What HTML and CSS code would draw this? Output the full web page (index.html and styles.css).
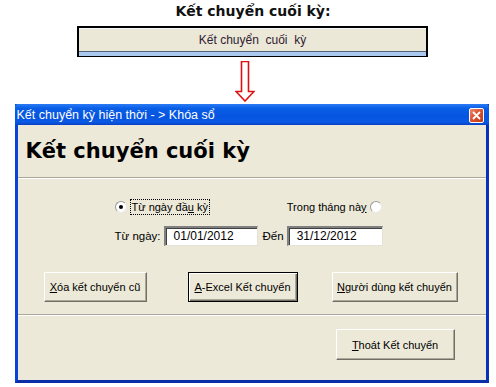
FILE: index.html
```html
<!DOCTYPE html>
<html lang="vi">
<head>
    <meta charset="UTF-8">
    <title>Kết chuyển cuối kỳ</title>
    <link rel="stylesheet" href="styles.css">
</head>
<body>
    <div class="page">
        <h1 class="caption">Kết chuyển cuối kỳ:</h1>
        <div class="menu-bar"><span>Kết chuyển&nbsp; cuối&nbsp; kỳ</span></div>
        <svg class="arrow" width="20" height="41" viewBox="0 0 20 41">
            <path d="M6.5 0.5 H13.5 V30.5 H19 L10 40 L1 30.5 H6.5 Z" fill="#fff" stroke="#e01010" stroke-width="1.6"/>
        </svg>

        <div class="window">
            <div class="titlebar">
                <span class="title-text">Kết chuyển kỳ hiện thời - &gt; Khóa sổ</span>
                <span class="close-btn">
                    <svg width="13" height="13" viewBox="0 0 13 13">
                        <path d="M3.5 3.5 L9.5 9.5 M9.5 3.5 L3.5 9.5" stroke="#fff" stroke-width="1.8" stroke-linecap="round"/>
                    </svg>
                </span>
            </div>
            <div class="window-body">
                <div class="header">
                    <h2>Kết chuyển cuối kỳ</h2>
                </div>

                <div class="options">
                    <div class="radio-row">
                        <label class="radio-item">
                            <span class="radio checked"></span>
                            <span class="focus-label">Từ ngày đầ<u>u</u> kỳ</span>
                        </label>
                        <label class="radio-item">
                            <span>Trong tháng nà<u>y</u></span>
                            <span class="radio"></span>
                        </label>
                    </div>
                    <div class="date-row">
                        <span class="date-label">Từ ngày:</span>
                        <span class="textbox from">01/01/2012</span>
                        <span class="date-label to-label">Đến</span>
                        <span class="textbox to">31/12/2012</span>
                    </div>
                </div>

                <div class="actions">
                    <button class="btn btn-delete"><u>X</u>óa kết chuyển cũ</button>
                    <button class="btn btn-default btn-excel"><u>A</u>-Excel Kết chuyển</button>
                    <button class="btn btn-user"><u>N</u>gười dùng kết chuyển</button>
                </div>

                <div class="footer">
                    <button class="btn btn-exit"><u>T</u>hoát Kết chuyển</button>
                </div>
            </div>
        </div>
    </div>
</body>
</html>
```

FILE: styles.css
```css
body {
    margin: 0;
    background-color: #ffffff;
    font-family: "DejaVu Sans", Verdana, sans-serif;
}
.page {
    width: 496px;
    height: 387px;
    display: flex;
    flex-direction: column;
    align-items: center;
    overflow: hidden;
}
.caption {
    margin: 1px 0 0 10px;
    font-size: 14px;
    line-height: 20px;
    font-weight: bold;
    color: #111;
}
.menu-bar {
    margin-top: 5px;
    margin-left: 9px;
    width: 347px;
    height: 24px;
    background-color: #ebe8d8;
    border: 2px solid #000;
    border-bottom: 1px solid #000;
    box-shadow: inset 0 1px 0 #f4f6fa, inset 0 -4px 0 #abc9ee, inset 0 -5px 0 #57657a;
    display: flex;
    justify-content: center;
    align-items: center;
    padding-bottom: 4px;
    font-family: "Liberation Sans", Arial, sans-serif;
    font-size: 12px;
    color: #302030;
}
.arrow {
    margin-top: 4px;
    margin-left: -6px;
    display: block;
}
.window {
    margin-top: 2px;
    margin-left: 7px;
    width: 468px;
    height: 276px;
    border: 3px solid #0842d8;
    border-top: none;
    border-right-color: #0631b8;
    border-bottom-color: #0a2fa8;
    display: flex;
    flex-direction: column;
    font-family: "Liberation Sans", Arial, sans-serif;
    font-size: 11px;
}
.titlebar {
    height: 21px;
    margin: 0 -3px;
    padding: 0 5px 0 2px;
    background: linear-gradient(to bottom, #2c7bf5 0%, #0a5fe6 20%, #0554e0 60%, #0a5ae6 85%, #0843c4 100%);
    border-radius: 3px 3px 0 0;
    display: flex;
    align-items: center;
    justify-content: space-between;
    color: #ffffff;
    font-size: 12.5px;
}
.close-btn {
    width: 13px;
    height: 13px;
    border: 1px solid #fff;
    border-radius: 2px;
    background: linear-gradient(135deg, #ee8a6a 0%, #d8502e 50%, #c03a18 100%);
    display: flex;
    margin-top: 1px;
}
.window-body {
    flex: 1;
    background-color: #ece9d8;
    display: flex;
    flex-direction: column;
}
.header {
    height: 52px;
    flex-shrink: 0;
    border-bottom: 1px solid #aca899;
    box-shadow: 0 1px 0 #ffffff;
    display: flex;
    align-items: center;
    padding-left: 8px;
}
.header h2 {
    margin: 0;
    font-family: "DejaVu Sans", Verdana, sans-serif;
    font-size: 21px;
    font-weight: bold;
    color: #000;
}
.options {
    margin: 21px 0 0 97px;
    width: 267px;
}
.radio-row {
    display: flex;
    justify-content: space-between;
    align-items: center;
    height: 16px;
}
.radio-item {
    display: flex;
    align-items: center;
    gap: 3px;
}
.radio {
    width: 10px;
    height: 10px;
    border-radius: 50%;
    border: 1px solid #9a9a9a;
    border-right-color: #e8e8e8;
    border-bottom-color: #e8e8e8;
    background-color: #fff;
    position: relative;
}
.radio.checked::after {
    content: "";
    position: absolute;
    left: 3px;
    top: 3px;
    width: 4px;
    height: 4px;
    border-radius: 50%;
    background-color: #000;
}
.focus-label {
    border: 1px dotted #000;
    padding: 1px 1px;
}
.date-row {
    display: flex;
    align-items: center;
    margin-top: 10px;
    height: 21px;
    white-space: nowrap;
}
.date-label {
    flex-shrink: 0;
    margin-right: 3px;
    font-size: 11.5px;
}
.to-label {
    margin-left: 5px;
    margin-right: 3px;
}
.textbox {
    flex-shrink: 0;
    height: 17px;
    background-color: #fff;
    border: 2px solid #808080;
    border-right: 1px solid #e4e2d8;
    border-bottom: 1px solid #e4e2d8;
    box-shadow: inset 1px 1px 0 #404040;
    display: flex;
    align-items: center;
    padding-left: 8px;
    font-size: 12px;
}
.textbox.from {
    width: 83px;
}
.textbox.to {
    width: 85px;
}
.actions {
    flex-shrink: 0;
    display: flex;
    align-items: flex-start;
    padding-left: 26px;
    margin-top: 26px;
    height: 30px;
    padding-bottom: 12px;
    border-bottom: 1px solid #aca899;
    box-shadow: 0 1px 0 #ffffff;
}
.btn {
    height: 30px;
    background-color: #ece9d8;
    border: 1px solid;
    border-color: #ffffff #716f64 #716f64 #ffffff;
    box-shadow: inset -1px -1px 0 #aca899;
    font-family: "Liberation Sans", Arial, sans-serif;
    font-size: 11px;
    color: #000;
    padding: 0;
}
.btn-delete {
    width: 103px;
}
.btn-excel {
    width: 110px;
    margin-left: 41px;
}
.btn-user {
    width: 126px;
    margin-left: 34px;
}
.btn-default {
    border: 1px solid #000;
    box-shadow: inset 1px 1px 0 #ffffff, inset -1px -1px 0 #716f64, inset -2px -2px 0 #aca899;
}
.footer {
    display: flex;
    justify-content: flex-end;
    padding: 14px 31px 0 0;
}
.btn-exit {
    width: 119px;
    height: 31px;
}
```
